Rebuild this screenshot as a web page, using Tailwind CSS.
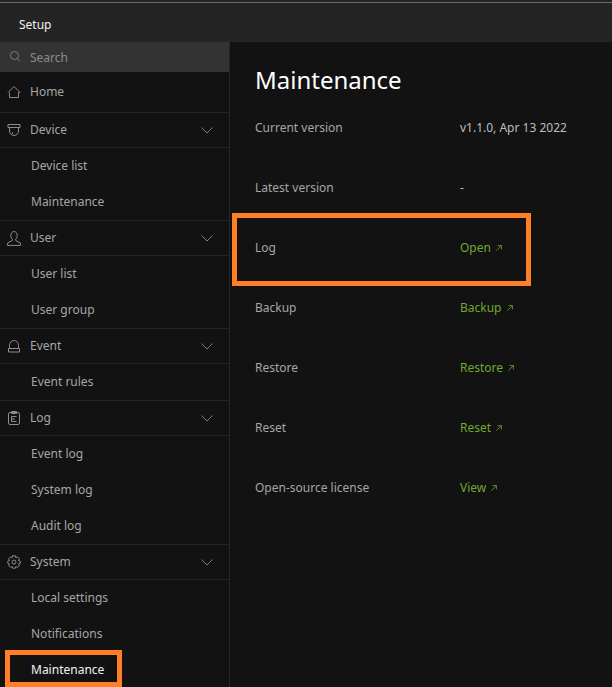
<!DOCTYPE html>
<html lang="en">
<head>
  <meta charset="UTF-8">
  <title>Setup - Maintenance</title>
  <script src="https://cdn.jsdelivr.net/npm/@tailwindcss/browser@4"></script>
</head>
<body class="bg-[#121212] font-['Noto_Sans',sans-serif] text-[12px] leading-[18px] text-[#a6a6a6]">
  <div class="relative w-[612px] h-[687px] overflow-hidden">
    <!-- Top bar -->
    <header class="h-[42px] bg-[#242424] pt-[2px]">
      <div class="h-[40px] border-t border-[#6a6a6a] flex items-center pl-[19px] pt-[5px] text-[#f2f2f2]">Setup</div>
    </header>

    <div class="flex h-[645px]">
      <!-- Sidebar -->
      <aside class="w-[230px] shrink-0 border-r border-[#262626] bg-[#121212]">
        <div class="h-[30px] bg-[#333333] flex items-center pl-[10px] gap-[10px] pt-[1px] text-[#8c8c8c]">
          <svg class="w-[10px] h-[11px] -mt-[2px]" viewBox="0 0 10 11" fill="none" stroke="#7d7d7d"><circle cx="4.5" cy="4.5" r="4"/><path d="M7.5 7.5L10 10.5"/></svg>
          <span>Search</span>
        </div>

        <div class="h-[41px] border-b border-[#262626] flex items-center gap-[9px] pl-[7px]">
          <svg class="w-[14px] h-[14px]" viewBox="0 0 14 14" fill="none" stroke="#8c8c8c"><path d="M1 7.5L7 1.5L13 7.5H11.5V12.5H2.5V7.5"/></svg>
          <span>Home</span>
        </div>

        <div class="h-[35px] border-b border-[#262626] flex items-center gap-[9px] pl-[7px] pr-[16px]">
          <svg class="w-[14px] h-[14px]" viewBox="0 0 14 14" fill="none" stroke="#8c8c8c"><path d="M1 1.5H13V4.5H1ZM2.5 4.5V8A4.5 4.5 0 0 0 11.5 8V4.5"/><circle cx="5.5" cy="10" r=".4"/></svg>
          <span class="flex-1">Device</span>
          <svg class="w-[12px] h-[7px]" viewBox="0 0 12 7" fill="none" stroke="#7d7d7d"><path d="M.5 .5L6 6L11.5 .5"/></svg>
        </div>
        <div class="border-b border-[#262626]">
          <div class="h-[36px] flex items-center pl-[31px]">Device list</div>
          <div class="h-[36px] flex items-center pl-[31px]">Maintenance</div>
        </div>

        <div class="h-[35px] border-b border-[#262626] flex items-center gap-[9px] pl-[7px] pr-[16px]">
          <svg class="w-[14px] h-[15px]" viewBox="0 0 14 15" fill="none" stroke="#8c8c8c"><path d="M7 .6C4.8 .6 3.8 2.4 3.8 4.4C3.8 6.4 4.6 7.6 5.4 8.4V9.4L.6 12V14.4H13.4V12L8.6 9.4V8.4C9.4 7.6 10.2 6.4 10.2 4.4C10.2 2.4 9.2 .6 7 .6Z"/></svg>
          <span class="flex-1">User</span>
          <svg class="w-[12px] h-[7px]" viewBox="0 0 12 7" fill="none" stroke="#7d7d7d"><path d="M.5 .5L6 6L11.5 .5"/></svg>
        </div>
        <div class="border-b border-[#262626]">
          <div class="h-[36px] flex items-center pl-[31px]">User list</div>
          <div class="h-[36px] flex items-center pl-[31px]">User group</div>
        </div>

        <div class="h-[35px] border-b border-[#262626] flex items-center gap-[9px] pl-[7px] pr-[16px]">
          <svg class="w-[14px] h-[14px]" viewBox="0 0 14 14" fill="none" stroke="#8c8c8c"><path d="M2.5 9.5V6.5A4.5 5 0 0 1 11.5 6.5V9.5M1.5 9.5H12.5V13H1.5Z"/></svg>
          <span class="flex-1">Event</span>
          <svg class="w-[12px] h-[7px]" viewBox="0 0 12 7" fill="none" stroke="#7d7d7d"><path d="M.5 .5L6 6L11.5 .5"/></svg>
        </div>
        <div class="border-b border-[#262626]">
          <div class="h-[36px] flex items-center pl-[31px]">Event rules</div>
        </div>

        <div class="h-[35px] border-b border-[#262626] flex items-center gap-[9px] pl-[7px] pr-[16px]">
          <svg class="w-[14px] h-[14px]" viewBox="0 0 14 14" fill="none" stroke="#8c8c8c"><rect x="1.5" y="1.5" width="11" height="12" rx="1.5"/><path d="M4.5 .5H9.5V2.5H4.5ZM4.5 5.5H9.5M4.5 8H8M4.5 10.5H9.5M4.5 5.5V10.5"/></svg>
          <span class="flex-1">Log</span>
          <svg class="w-[12px] h-[7px]" viewBox="0 0 12 7" fill="none" stroke="#7d7d7d"><path d="M.5 .5L6 6L11.5 .5"/></svg>
        </div>
        <div class="border-b border-[#262626]">
          <div class="h-[36px] flex items-center pl-[31px]">Event log</div>
          <div class="h-[36px] flex items-center pl-[31px]">System log</div>
          <div class="h-[36px] flex items-center pl-[31px]">Audit log</div>
        </div>

        <div class="h-[35px] border-b border-[#262626] flex items-center gap-[9px] pl-[7px] pr-[16px]">
          <svg class="w-[14px] h-[14px]" viewBox="0 0 14 14" fill="none" stroke="#8c8c8c"><path d="M5.6 .8H8.4L8.8 2.6L10.4 1.9L12.4 3.9L11.5 5.5L13.2 6V8.4L11.5 8.9L12.4 10.5L10.4 12.3L8.8 11.6L8.4 13.2H5.6L5.2 11.6L3.6 12.3L1.6 10.5L2.5 8.9L.8 8.4V6L2.5 5.5L1.6 3.9L3.6 1.9L5.2 2.6Z"/><circle cx="7" cy="7.1" r="2"/></svg>
          <span class="flex-1">System</span>
          <svg class="w-[12px] h-[7px]" viewBox="0 0 12 7" fill="none" stroke="#7d7d7d"><path d="M.5 .5L6 6L11.5 .5"/></svg>
        </div>
        <div>
          <div class="h-[36px] flex items-center pl-[31px]">Local settings</div>
          <div class="h-[36px] flex items-center pl-[31px]">Notifications</div>
          <div class="h-[36px] flex items-center pl-[31px] text-[#f2f2f2]">Maintenance</div>
        </div>
      </aside>

      <!-- Content -->
      <main class="flex-1 pl-[25px]">
        <h1 class="text-[24px] leading-[32px] text-white mt-[22px] mb-[13px]">Maintenance</h1>
        <div class="grid grid-cols-[205px_1fr] auto-rows-[60px]">
          <div class="pt-[10px]">Current version</div><div class="pt-[10px] text-[#bdbdbd]">v1.1.0, Apr 13 2022</div>
          <div class="pt-[10px]">Latest version</div><div class="pt-[10px] text-[#bdbdbd]">-</div>
          <div class="pt-[10px]">Log</div>
          <div class="pt-[10px] text-[#6fa82f] flex items-center h-[28px]">Open<svg class="w-[6px] h-[6px] ml-[5px] -mt-[1px]" viewBox="0 0 6 6" fill="none" stroke="#6fa82f" stroke-width=".8"><path d="M.4 5.6L5.4 .6M1.6 .6H5.4V4.4"/></svg></div>
          <div class="pt-[10px]">Backup</div>
          <div class="pt-[10px] text-[#6fa82f] flex items-center h-[28px]">Backup<svg class="w-[6px] h-[6px] ml-[5px] -mt-[1px]" viewBox="0 0 6 6" fill="none" stroke="#6fa82f" stroke-width=".8"><path d="M.4 5.6L5.4 .6M1.6 .6H5.4V4.4"/></svg></div>
          <div class="pt-[10px]">Restore</div>
          <div class="pt-[10px] text-[#6fa82f] flex items-center h-[28px]">Restore<svg class="w-[6px] h-[6px] ml-[5px] -mt-[1px]" viewBox="0 0 6 6" fill="none" stroke="#6fa82f" stroke-width=".8"><path d="M.4 5.6L5.4 .6M1.6 .6H5.4V4.4"/></svg></div>
          <div class="pt-[10px]">Reset</div>
          <div class="pt-[10px] text-[#6fa82f] flex items-center h-[28px]">Reset<svg class="w-[6px] h-[6px] ml-[5px] -mt-[1px]" viewBox="0 0 6 6" fill="none" stroke="#6fa82f" stroke-width=".8"><path d="M.4 5.6L5.4 .6M1.6 .6H5.4V4.4"/></svg></div>
          <div class="pt-[10px]">Open-source license</div>
          <div class="pt-[10px] text-[#6fa82f] flex items-center h-[28px]">View<svg class="w-[6px] h-[6px] ml-[5px] -mt-[1px]" viewBox="0 0 6 6" fill="none" stroke="#6fa82f" stroke-width=".8"><path d="M.4 5.6L5.4 .6M1.6 .6H5.4V4.4"/></svg></div>
        </div>
      </main>
    </div>

    <!-- Annotation boxes -->
    <div class="absolute left-[232px] top-[213px] w-[299px] h-[73px] border-[5px] border-[#ff7f27]"></div>
    <div class="absolute left-[5px] top-[650px] w-[117px] h-[37px] border-[5px] border-[#ff7f27]"></div>
  </div>
</body>
</html>
